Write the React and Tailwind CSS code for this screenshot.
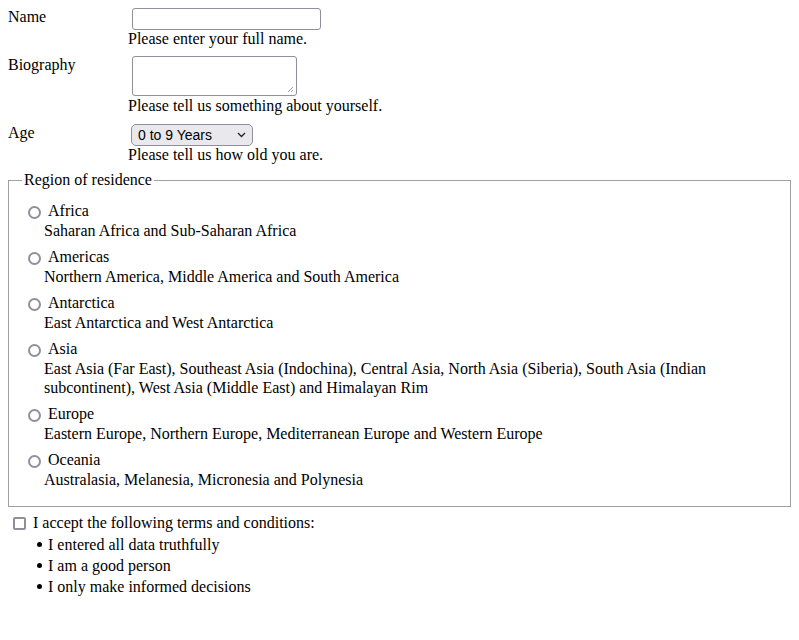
import React from 'react';

const regions = [
  { name: 'Africa', desc: 'Saharan Africa and Sub-Saharan Africa' },
  { name: 'Americas', desc: 'Northern America, Middle America and South America' },
  { name: 'Antarctica', desc: 'East Antarctica and West Antarctica' },
  {
    name: 'Asia',
    desc: 'East Asia (Far East), Southeast Asia (Indochina), Central Asia, North Asia (Siberia), South Asia (Indian subcontinent), West Asia (Middle East) and Himalayan Rim',
  },
  { name: 'Europe', desc: 'Eastern Europe, Northern Europe, Mediterranean Europe and Western Europe' },
  { name: 'Oceania', desc: 'Australasia, Melanesia, Micronesia and Polynesia' },
];

const terms = ['I entered all data truthfully', 'I am a good person', 'I only make informed decisions'];

const Row = ({ label, children }) => (
  <div className="flex">
    <div className="w-[120px] shrink-0 leading-[18px]">{label}</div>
    <div className="flex flex-col items-start">{children}</div>
  </div>
);

const App = () => {
  return (
    <div className="min-h-screen bg-white p-2 text-[16px] text-black font-['Liberation_Serif','Times_New_Roman',serif]">
      {/* top fields */}
      <Row label="Name">
        <div className="ml-1 h-[22px] w-[189px] rounded-[3px] border border-[#8f8f9d] bg-white" />
        <div className="leading-[18px]">Please enter your full name.</div>
      </Row>

      <div className="mt-2">
        <Row label="Biography">
          <div className="relative ml-1 h-[40px] w-[165px] rounded-[3px] border border-[#8f8f9d] bg-white">
            <svg className="absolute right-[2px] bottom-[2px]" width="7" height="7" viewBox="0 0 7 7">
              <path d="M6 1L1 6M6 4L4 6" stroke="#9a9aa4" strokeWidth="1" />
            </svg>
          </div>
          <div className="mt-px leading-[18px]">Please tell us something about yourself.</div>
        </Row>
      </div>

      <div className="mt-[9px]">
        <Row label="Age">
          <div className="ml-[3px] flex h-[22px] w-[122px] items-center justify-between rounded-[5px] border border-[#8f8f9d] bg-[#e9e9ed] pl-[6px] pr-[6px] font-['Liberation_Sans',Arial,sans-serif] text-[14px]">
            <span>0 to 9 Years</span>
            <svg width="9" height="6" viewBox="0 0 9 6">
              <path d="M1 1l3.5 3.5L8 1" fill="none" stroke="#222" strokeWidth="1.3" />
            </svg>
          </div>
          <div className="leading-[18px]">Please tell us how old you are.</div>
        </Row>
      </div>

      {/* region fieldset */}
      <fieldset className="mt-[7px] w-[783px] border border-[#a0a0a0] pl-[13px] pr-3 pb-[17px] pt-[12px]">
        <legend className="px-[2px] leading-[18px]">Region of residence</legend>
        <div className="flex flex-col gap-[7px] pl-[6px]">
          {regions.map(r => (
            <div key={r.name}>
              <div className="flex h-5 items-center">
                <span className="mr-[7px] inline-block h-[13px] w-[13px] translate-y-px rounded-full border-2 border-[#8f8f9d] bg-white" />
                <span>{r.name}</span>
              </div>
              <div className="pl-4 leading-[19px]">{r.desc}</div>
            </div>
          ))}
        </div>
      </fieldset>

      {/* terms */}
      <div className="mt-[7px] flex items-center pl-[5px] leading-[18px]">
        <span className="mr-[7px] inline-block h-[13px] w-[13px] rounded-[2px] border-2 border-[#8f8f9d] bg-white" />
        <span>I accept the following terms and conditions:</span>
      </div>
      <ul className="mt-[2px] pl-[29px]">
        {terms.map(t => (
          <li key={t} className="flex items-center leading-[21px]">
            <span className="mr-[6px] inline-block h-[5px] w-[5px] rounded-full bg-black" />
            {t}
          </li>
        ))}
      </ul>
    </div>
  );
};

export default App;
